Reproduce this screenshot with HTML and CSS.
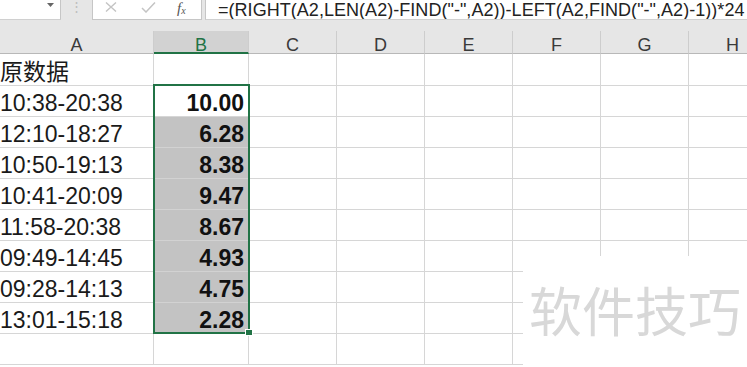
FILE: index.html
```html
<!DOCTYPE html>
<html lang="zh-CN">
<head>
    <meta charset="UTF-8">
    <meta name="viewport" content="width=device-width, initial-scale=1.0">
    <title>软件技巧</title>
    <link rel="stylesheet" href="styles.css">
</head>
<body>
    <div class="top">
        <div class="formula-bar">
            <div class="name-box">
                <svg class="arrow" width="7" height="4" viewBox="0 0 7 4"><path d="M0 0h7L3.5 4z" fill="#666"/></svg>
            </div>
            <div class="grip">⋮</div>
            <div class="buttons">
                <svg width="12" height="10" viewBox="0 0 12 10"><path d="M1 0.5l10 9M11 0.5l-10 9" stroke="#c4c4c4" stroke-width="1.4" fill="none"/></svg>
                <svg width="15" height="11" viewBox="0 0 15 11"><path d="M1 6l4 4l9-9.5" stroke="#c4c4c4" stroke-width="1.5" fill="none"/></svg>
                <span class="fx">f<sub>x</sub></span>
            </div>
            <div class="input">=(RIGHT(A2,LEN(A2)-FIND("-",A2))-LEFT(A2,FIND("-",A2)-1))*24</div>
        </div>
    </div>

    <div class="sheet">
        <div class="grid">
            <div class="hd">A</div>
            <div class="hd active">B</div>
            <div class="hd">C</div>
            <div class="hd">D</div>
            <div class="hd">E</div>
            <div class="hd">F</div>
            <div class="hd">G</div>
            <div class="hd">H</div>
        </div>
        <div id="rows"></div>

        <div class="selection"><span class="handle"></span></div>
        <div class="watermark">软件技巧</div>
    </div>

    <script>
        var data = [
            ['原数据', ''],
            ['10:38-20:38', '10.00'],
            ['12:10-18:27', '6.28'],
            ['10:50-19:13', '8.38'],
            ['10:41-20:09', '9.47'],
            ['11:58-20:38', '8.67'],
            ['09:49-14:45', '4.93'],
            ['09:28-14:13', '4.75'],
            ['13:01-15:18', '2.28'],
            ['', '']
        ];
        var rows = document.getElementById('rows');
        data.forEach(function(r, i) {
            var row = document.createElement('div');
            row.className = 'grid row' + (i === 0 ? ' first' : '');
            for (var c = 0; c < 8; c++) {
                var cell = document.createElement('div');
                cell.className = 'cell';
                if (c === 0) {
                    cell.className += ' text';
                    cell.textContent = r[0];
                }
                if (c === 1) {
                    cell.className += ' num';
                    if (i >= 2 && i <= 8) cell.className += ' filled';
                    cell.textContent = r[1];
                }
                row.appendChild(cell);
            }
            rows.appendChild(row);
        });
    </script>
</body>
</html>
```

FILE: styles.css
```css
body {
    margin: 0;
    width: 747px;
    height: 367px;
    overflow: hidden;
    background: #fff;
    font-family: "Liberation Sans", "Noto Sans CJK SC", sans-serif;
    color: #111;
}
.top {
    height: 31px;
    background: #e6e6e6;
}
.formula-bar {
    display: flex;
    height: 20px;
}
.name-box {
    width: 61px;
    background: #fff;
    border-right: 1px solid #c6c6c6;
    border-bottom: 1px solid #d0d0d0;
    box-sizing: border-box;
    display: flex;
    justify-content: flex-end;
    padding: 3px 6px 0 0;
}
.name-box .arrow { display: block; }
.grip {
    width: 31px;
    text-align: center;
    color: #bdbdbd;
    font-size: 13px;
    line-height: 14px;
}
.buttons {
    width: 110px;
    background: #fff;
    border: 1px solid #c6c6c6;
    border-top: none;
    box-sizing: border-box;
    display: flex;
    align-items: flex-start;
    padding: 2px 0 0 12px;
}
.buttons svg:first-child { margin-right: 24px; }
.buttons svg:nth-child(2) { margin-right: 21px; }
.fx {
    font-family: "Liberation Serif", serif;
    font-style: italic;
    color: #555;
    font-size: 15px;
    line-height: 13px;
}
.fx sub { font-size: 10px; vertical-align: -1px; }
.input {
    flex: 1;
    margin-left: 3px;
    background: #fff;
    border-left: 1px solid #c6c6c6;
    border-bottom: 1px solid #d0d0d0;
    box-sizing: border-box;
    padding-left: 12px;
    font-size: 18px;
    letter-spacing: 0.04px;
    line-height: 20px;
    color: #222;
    white-space: nowrap;
    overflow: hidden;
}
.sheet {
    position: relative;
}
.grid {
    display: grid;
    grid-template-columns: 154px 95px 88px 88px 88px 88px 88px 88px;
}
.hd {
    height: 23px;
    box-sizing: border-box;
    background: #e6e6e6;
    border-right: 1px solid #cdcdcd;
    border-bottom: 1px solid #b8b8b8;
    text-align: center;
    font-size: 18px;
    line-height: 18px;
    padding-top: 5px;
    color: #3a3a3a;
}
.hd.active {
    background: #d2d2d2;
    color: #217346;
    border-bottom: 2px solid #217346;
}
.cell {
    height: 31px;
    box-sizing: border-box;
    border-right: 1px solid #d6d6d6;
    border-bottom: 1px solid #d6d6d6;
    font-size: 23px;
    line-height: 26px;
    padding-top: 4px;
    white-space: nowrap;
    overflow: hidden;
}
.row.first .cell {
    height: 32px;
    padding-top: 5px;
}
.text { padding-left: 0; color: #1a1a1a; }
.num {
    text-align: right;
    font-weight: bold;
    padding-right: 4px;
}
.filled {
    background: #c3c3c3;
    border-bottom-color: #d2d2d2;
}
.selection {
    position: absolute;
    left: 153px;
    top: 53px;
    width: 97px;
    height: 250px;
    box-sizing: border-box;
    border: 2px solid #217346;
}
.handle {
    position: absolute;
    right: -5px;
    bottom: -4px;
    width: 6px;
    height: 5px;
    background: #217346;
    border: 1px solid #fff;
}
.watermark {
    position: absolute;
    left: 523px;
    top: 225px;
    width: 224px;
    height: 120px;
    background: #fff;
    box-sizing: border-box;
    padding: 25px 0 0 6px;
    font-family: "Noto Sans CJK SC", sans-serif;
    font-size: 53px;
    line-height: 56px;
    color: #d8d8d8;
}
```
